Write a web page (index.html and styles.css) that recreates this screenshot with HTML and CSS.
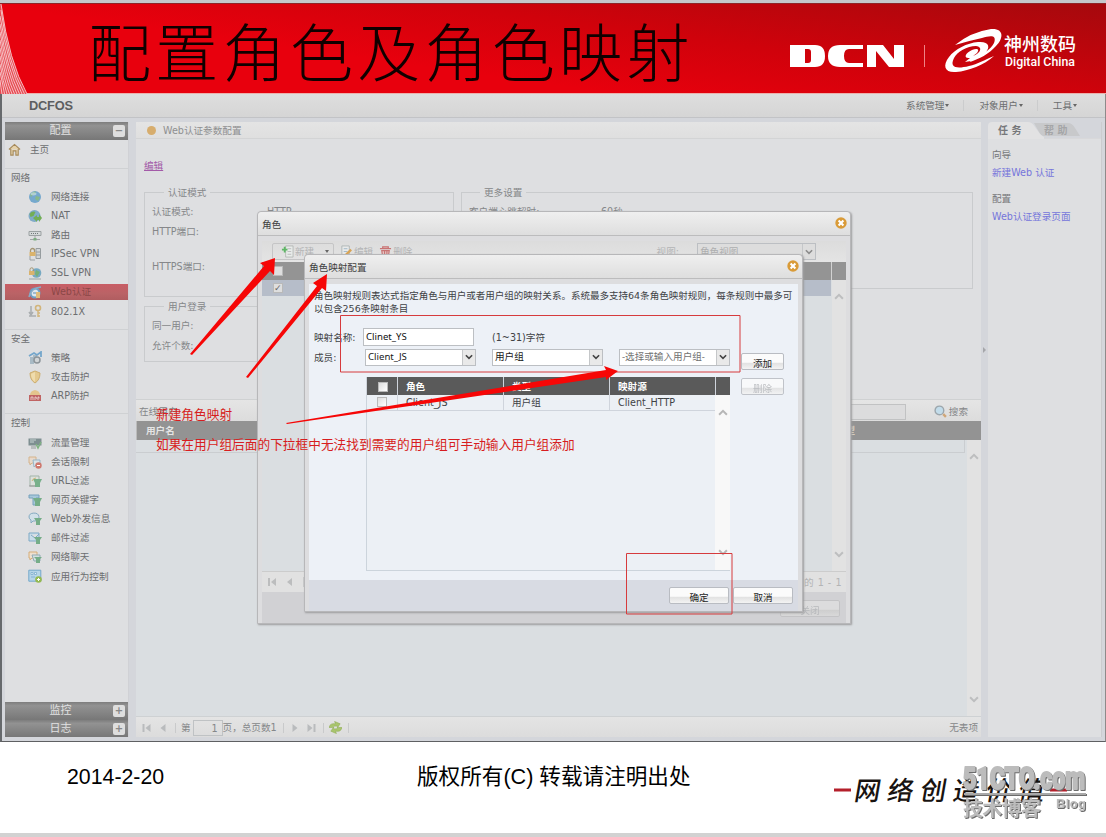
FILE: index.html
```
<!DOCTYPE html>
<html lang="zh-CN">
<head>
    <meta charset="UTF-8">
    <meta name="viewport" content="width=device-width, initial-scale=1.0">
    <title>配置角色及角色映射</title>
    <link rel="stylesheet" href="styles.css">
</head>
<body>
    <!-- Icon sprite -->
    <svg class="sprite" aria-hidden="true">
        <symbol id="i-home" viewBox="0 0 14 14"><path d="M1 7 7 1.500l6 5.500M3 6.500V13h2.500V8.500h3V13H11V6.500" fill="#e6d3ac" stroke="#a68a5a" stroke-width="1.200"/></symbol>
        <symbol id="i-globe" viewBox="0 0 14 14"><circle cx="7" cy="7" r="6" fill="#76a9cd"/><path d="M2 4q3-3 6-2.500l-1 3-3 1-1 2zM8 6l4 1-2 4-3-2z" fill="#86b98b"/><ellipse cx="5.500" cy="3.800" rx="3" ry="1.600" fill="#c5dcea" opacity=".7"/></symbol>
        <symbol id="i-nat" viewBox="0 0 14 14"><circle cx="6.500" cy="7" r="6" fill="#80abc8"/><path d="M1.500 5q3-3.500 6-2l-2 4-3 1zM5 9l4-3v2h2V5l3 4-3 4v-2H9v2z" fill="#72ae55"/></symbol>
        <symbol id="i-route" viewBox="0 0 14 14"><path d="M1 3.500h12v4H1z" fill="#d4d8d9" stroke="#9ba1a2"/><path d="M3 5.500h1m1 0h1m1 0h1m1 0h1" stroke="#717879"/><path d="M7 8v2M2 11.500h10" stroke="#a0a5a6"/><path d="M5.500 10h3v2.500h-3z" fill="#7bad80"/></symbol>
        <symbol id="i-ipsec" viewBox="0 0 14 14"><path d="M8 1.500h4.500v10H8zM8 5h4.500M8 8h4.500" fill="#d1d5d7" stroke="#969c9f"/><path d="M2.500 5V3.500a2 2 0 0 1 4 0V5" fill="none" stroke="#a59673" stroke-width="1.300"/><path d="M1.500 5h6v4h-6z" fill="#dab36c"/><path d="M2 9v4h5" fill="none" stroke="#9ca1a3"/></symbol>
        <symbol id="i-ssl" viewBox="0 0 14 14"><circle cx="8.500" cy="7" r="4.800" fill="#76a9c2"/><path d="m8 4 4 2-3 5-2-3z" fill="#77b079"/><path d="M2 5V3.500a1.700 1.700 0 0 1 3.400 0V5" fill="none" stroke="#a59673"/><path d="M1 5h5.500v4H1z" fill="#dab36c"/><path d="M1 13h12" stroke="#9aa4a2"/></symbol>
        <symbol id="i-web" viewBox="0 0 14 14"><circle cx="7" cy="8" r="4.500" fill="#dfe7ed" stroke="#6c9fc6" stroke-width="2"/><path d="M1 12Q3 3 13 2M5 8h6" fill="none" stroke="#88acc7" stroke-width="1.500"/><path d="M8 7h4v6H8z" fill="#dfbd7c"/></symbol>
        <symbol id="i-8021x" viewBox="0 0 14 14"><path d="M3 2v8m-2-2 2 3 2-3M1 12h7" fill="none" stroke="#a9adaf" stroke-width="1.500"/><circle cx="10" cy="4" r="2.500" fill="none" stroke="#d2b57b" stroke-width="1.600"/><path d="M10 6v7M10 9h2M10 12h2" stroke="#d2b57b" stroke-width="1.400"/></symbol>
        <symbol id="i-policy" viewBox="0 0 14 14"><path d="M2 6h4v7H2zM5 4h4v7H5z" fill="#a8bac5"/><path d="M1 5 6 2l3 2 4-3v5" fill="none" stroke="#74a6cb" stroke-width="1.800"/><circle cx="9" cy="9" r="3" fill="#d1d5d7" stroke="#8c9499" stroke-width="1.500"/></symbol>
        <symbol id="i-shield" viewBox="0 0 14 14"><path d="M7 1 12 3q0 7-5 10Q2 10 2 3z" fill="#e4c98f" stroke="#cdae70"/><path d="M7 2v10Q3 9 3 4z" fill="#efdcad"/></symbol>
        <symbol id="i-arp" viewBox="0 0 14 14"><path d="M2 6q0-4 5-5 5 1 5 5v6H2z" fill="#e4c58d"/><path d="M1 6h12v6H1z" fill="#c06463"/><path d="M3 11V8h2v3M7 11V8h1l1 2M10 11V8h1v1.500" fill="none" stroke="#eddcda" stroke-width=".8"/></symbol>
        <symbol id="i-flow" viewBox="0 0 14 14"><path d="M.5 2.500h13v7H.5z" fill="#7e8f91"/><path d="M2 4h6M2 6h4" stroke="#c8d4d3"/><path d="m8 8 2 4 3-6" fill="none" stroke="#7fb282" stroke-width="1.500"/><path d="M3 10h5v3H3z" fill="#b8bcbd"/></symbol>
        <symbol id="i-session" viewBox="0 0 14 14"><path d="M1 2h7v6H4l-2 2V8H1z" fill="#e8d9cb" stroke="#d5b48c"/><path d="M5 5h7v5H8l-2 2z" fill="#dae3e9" stroke="#97b5c8"/><circle cx="10.500" cy="10.500" r="3.200" fill="#cf796f"/><path d="M9 10.500h3" stroke="#fff"/></symbol>
        <symbol id="i-url" viewBox="0 0 14 14"><path d="M2 2h9v10H2z" fill="#dce1dc" stroke="#a2b4a9"/><path d="M1 12h9" stroke="#999"/><path d="M5 5h9l-2 4v4H7V9z" fill="#78b08b"/><path d="M4 7q1-3 4-3" fill="none" stroke="#ccb778"/></symbol>
        <symbol id="i-word" viewBox="0 0 14 14"><path d="M1 2h10v3H8v7H5V5H1z" fill="#a8c8db" stroke="#76a1bc"/><path d="M5 5h9l-2 4v4H7V9z" fill="#75ad88"/></symbol>
        <symbol id="i-post" viewBox="0 0 14 14"><path d="M1 5a5 4 0 1 1 6 4H5l-2 2V8Q1 7 1 5z" fill="#d1e0e9" stroke="#84aac1"/><path d="M6 6h8l-2 3v4H8V9z" fill="#75ad88"/></symbol>
        <symbol id="i-mail" viewBox="0 0 14 14"><path d="M1 2h10v8H1zM3 4l4 3 4-4" fill="#c8dce9" stroke="#7fa9c5"/><path d="M6 6h8l-2 3v4H8V9z" fill="#75ad88"/></symbol>
        <symbol id="i-chat" viewBox="0 0 14 14"><path d="M1 2h8v6H4l-2 2V8H1z" fill="#eee0cf" stroke="#d6ad79"/><path d="M4 5h8v6H6z" fill="#d4dfdf" stroke="#91abb4"/><path d="M6 7h8l-2 2v4H8V9z" fill="#75ad88"/></symbol>
        <symbol id="i-app" viewBox="0 0 14 14"><path d="M.8 1.200h12v11h-12z" fill="#b6d5e8" stroke="#74a8ca"/><path d="M3 3.500h2v2H3zM6.500 3.500h2v2h-2zM3 8h4" fill="#e7f1f5" stroke="#74a8ca" stroke-width=".7"/><circle cx="10.500" cy="10.500" r="3.300" fill="#94b951"/><path d="M9 10.500h3M10.500 9v3" stroke="#fff"/></symbol>
        <symbol id="i-down" viewBox="0 0 9 6"><path d="m1 1 3.500 3.500L8 1" fill="none" stroke="currentColor" stroke-width="1.800"/></symbol>
        <symbol id="i-up" viewBox="0 0 9 6"><path d="m1 5 3.500-3.500L8 5" fill="none" stroke="currentColor" stroke-width="1.800"/></symbol>
        <symbol id="i-close" viewBox="0 0 12 12"><circle cx="6" cy="6" r="5.700" fill="#d99b38"/><path d="m3.600 3.600 4.800 4.800m0-4.800L3.600 8.400" stroke="#fff" stroke-width="2.100"/></symbol>
        <symbol id="i-first" viewBox="0 0 10 10"><path d="M1 1h2v8H1zM9 1v8L4 5z" fill="currentColor"/></symbol>
        <symbol id="i-prev" viewBox="0 0 10 10"><path d="M7 1v8L2 5z" fill="currentColor"/></symbol>
        <symbol id="i-next" viewBox="0 0 10 10"><path d="M3 1v8l5-4z" fill="currentColor"/></symbol>
        <symbol id="i-last" viewBox="0 0 10 10"><path d="M1 1v8l5-4zM7 1h2v8H7z" fill="currentColor"/></symbol>
    </svg>

    <div class="slide">
        <header class="banner">
            <svg class="rays" viewBox="0 0 30 90">
                <path d="M0 0h1Q10 60 27 90H0z" fill="#e64a52"/>
                <path d="M1 0Q9 58 27 90M1 6Q8 60 24.500 90M0 12Q8 62 22 90M0 20Q7 65 19.500 90M0 28Q7 69 17 90M0 36Q6 72 14.500 90M0 44Q5 74 12 90M0 52Q4 76 9.500 90M0 60Q3 78 7 90M0 68Q3 81 4.500 90M0 76Q1 84 2 90" fill="none" stroke="#f7cdcf" stroke-width=".9"/>
            </svg>
            <h1>配置角色及角色映射</h1>
            <svg class="brand" viewBox="0 0 290 50">
                <path d="M0 20h25q10 0 10 11t-10 11H0zM15 24v14h3q3 0 3-3v-8q0-3-3-3zM73 20v4H59q-5 0-5 7t5 7h14v4H50q-12 0-12-11t12-11zM77 20h16l11 14V20h10v22H99L86 26v16h-9z" fill="#fff" fill-rule="evenodd"/>
                <path d="M134.500 20v22" stroke="#ef8285"/>
                <path d="M165 20Q181 7 201 4c13-1 13 9 5 17-7 8-17 13-26 16l3-4c10-3 18-9 21-15 3-8-3-8-12-5q-14 3-27 7zM204 31c-10 9-25 15-38 16-11 1-14-6-7-15 6-8 18-14 29-15 11-1 13 5 7 11-4 5-12 8-20 9l5-4c-7 1-5-5 2-8 5-2 8-1 5 3l-4 3c8-3 10-9 3-10-9 0-19 6-22 12-5 10 3 11 15 8 9-2 15-6 25-10z" fill="#fff"/>
                <text x="214" y="26" class="brand-cn" textLength="72">神州数码</text>
                <text x="215" y="40.500" class="brand-en" textLength="70" lengthAdjust="spacingAndGlyphs">Digital China</text>
            </svg>
        </header>

        <div class="console">
            <div class="topbar">
                <strong class="logo">DCFOS</strong>
                <nav class="menu">
                    <span>系统管理<i class="caret"></i></span>
                    <span>对象用户<i class="caret"></i></span>
                    <span>工具<i class="caret"></i></span>
                </nav>
            </div>

            <div class="workspace">
                <aside class="sidebar">
                    <div class="side-head">配置<b class="toggle">−</b></div>
                    <div class="home"><svg><use href="#i-home"/></svg>主页</div>
                    <div class="group">
                        <h3>网络</h3>
                        <ul>
                            <li><svg><use href="#i-globe"/></svg>网络连接</li>
                            <li><svg><use href="#i-nat"/></svg>NAT</li>
                            <li><svg><use href="#i-route"/></svg>路由</li>
                            <li><svg><use href="#i-ipsec"/></svg>IPSec VPN</li>
                            <li><svg><use href="#i-ssl"/></svg>SSL VPN</li>
                            <li class="active"><svg><use href="#i-web"/></svg>Web认证</li>
                            <li><svg><use href="#i-8021x"/></svg>802.1X</li>
                        </ul>
                    </div>
                    <div class="group">
                        <h3>安全</h3>
                        <ul>
                            <li><svg><use href="#i-policy"/></svg>策略</li>
                            <li><svg><use href="#i-shield"/></svg>攻击防护</li>
                            <li><svg><use href="#i-arp"/></svg>ARP防护</li>
                        </ul>
                    </div>
                    <div class="group">
                        <h3>控制</h3>
                        <ul>
                            <li><svg><use href="#i-flow"/></svg>流量管理</li>
                            <li><svg><use href="#i-session"/></svg>会话限制</li>
                            <li><svg><use href="#i-url"/></svg>URL过滤</li>
                            <li><svg><use href="#i-word"/></svg>网页关键字</li>
                            <li><svg><use href="#i-post"/></svg>Web外发信息</li>
                            <li><svg><use href="#i-mail"/></svg>邮件过滤</li>
                            <li><svg><use href="#i-chat"/></svg>网络聊天</li>
                            <li><svg><use href="#i-app"/></svg>应用行为控制</li>
                        </ul>
                    </div>
                    <div class="side-foot">
                        <div class="side-head">监控<b class="toggle">+</b></div>
                        <div class="side-head">日志<b class="toggle">+</b></div>
                    </div>
                </aside>

                <main class="main">
                    <div class="panel-title"><i class="dot"></i>Web认证参数配置</div>
                    <div class="settings">
                        <a class="edit" href="#">编辑</a>
                        <div class="columns">
                            <div>
                                <fieldset class="mode">
                                    <legend>认证模式</legend>
                                    <p><label>认证模式:</label>HTTP</p>
                                    <p><label>HTTP端口:</label></p>
                                    <p class="https"><label>HTTPS端口:</label></p>
                                </fieldset>
                                <fieldset class="login">
                                    <legend>用户登录</legend>
                                    <p><label>同一用户:</label></p>
                                    <p><label>允许个数:</label></p>
                                </fieldset>
                            </div>
                            <fieldset class="more">
                                <legend>更多设置</legend>
                                <p><label>客户端心跳超时:</label>60秒</p>
                            </fieldset>
                        </div>
                    </div>
                    <div class="list-bar">
                        <span>在线用户</span>
                        <div class="search">
                            <i class="search-box"></i>
                            <svg viewBox="0 0 12 12"><circle cx="5" cy="5" r="4" fill="#c2dcea" stroke="#9ca6ac" stroke-width="1.300"/><path d="m8.500 8.500 2.500 2.500" stroke="#cfa678" stroke-width="2.200"/></svg>
                            搜索
                        </div>
                    </div>
                    <div class="list-head"><span>用户名</span><span class="list-type">型</span></div>
                    <div class="list-body">
                        <div class="list-row"></div>
                        <div class="scroll"><svg><use href="#i-up"/></svg><svg><use href="#i-down"/></svg></div>
                    </div>
                    <div class="pager">
                        <svg><use href="#i-first"/></svg>
                        <svg><use href="#i-prev"/></svg>
                        <i class="sep"></i>
                        <span>第</span><b class="page-no">1</b><span class="page-count">页，总页数1</span>
                        <i class="sep"></i>
                        <svg><use href="#i-next"/></svg>
                        <svg><use href="#i-last"/></svg>
                        <i class="sep"></i>
                        <svg class="refresh" viewBox="0 0 14 14"><path d="M0 7Q1 2 7 3L6 .5 12 3 9 7.500V5.500Q5 5 4 7zM14 7q-1 5-7 4l1 2.500L2 11l3-4.500v2q4 .5 5-1.500z" fill="#a9c56d" stroke="#8fab55" stroke-width=".6"/></svg>
                        <i class="sep"></i>
                        <span class="empty">无表项</span>
                    </div>
                </main>

                <div class="splitter"></div>

                <aside class="tasks">
                    <div class="tabs">
                        <svg viewBox="0 0 114 17"><path d="M46 1h34q4 0 7 5l5 8H56q-3 0-5-4z" fill="#c8c9cb"/><path d="M0 17V4q0-4 4-4h36q4 0 7 5l5 7q2 2 4 3v2z" fill="#e2e2e3"/></svg>
                        <span>任 务</span><span class="tab-off">帮 助</span>
                    </div>
                    <div class="task-list">
                        <h4>向导</h4>
                        <a href="#">新建Web 认证</a>
                        <h4>配置</h4>
                        <a href="#">Web认证登录页面</a>
                    </div>
                </aside>
            </div>
        </div>

        <footer class="foot">
            <span class="date">2014-2-20</span>
            <span class="rights">版权所有(C) 转载请注明出处</span>
            <svg class="slogan" viewBox="0 0 276 80">
                <path d="M4 39h17M220 39h17" stroke="#b41f2b" stroke-width="3"/>
                <text x="24" y="49" class="slogan-text" textLength="190" transform="translate(8 0) skewX(-10)">网络创造价值</text>
                <g class="mark">
                    <text x="133" y="38" class="mark-big" textLength="122" lengthAdjust="spacingAndGlyphs">51CTO.com</text>
                    <text x="133" y="65" class="mark-cn" textLength="78">技术博客</text>
                    <text x="226" y="57" class="mark-blog" textLength="30">Blog</text>
                    <path d="M134 43h122" stroke="#a9a9a9" stroke-width="2"/>
                </g>
            </svg>
        </footer>
        <div class="edge"></div>

        <!-- Role window, disabled behind the mapping dialog -->
        <section class="dialog role-dialog">
            <div class="dialog-title">角色<svg><use href="#i-close"/></svg></div>
            <div class="role-body">
                <div class="role-tools">
                    <span class="tool-new"><svg viewBox="0 0 14 14"><path d="M5 1h8v12H5z" fill="#e8ecea" stroke="#b4b8b5"/><path d="M7 4h4M7 7h4M7 10h4" stroke="#bbb"/><path d="M4 2v6M1 5h6" stroke="#5fb766" stroke-width="2"/></svg>新建<i class="caret"></i></span>
                    <span><svg viewBox="0 0 14 14"><path d="M2 1h8v12H2z" fill="#e9eaea" stroke="#aeb6b7"/><path d="M4 4h4M4 7h4" stroke="#9eb5c5"/><path d="m5 12 7-7" stroke="#d9a354" stroke-width="2.500"/></svg>编辑</span>
                    <span><svg viewBox="0 0 14 14"><path d="M1 4h12M4 4V2h6v2M3 6h8l-1 7H4zM6 6v6M8.500 6v6" fill="#e7cbca" stroke="#c87373" stroke-width="1.300"/></svg>删除</span>
                    <span class="view-label">视图:</span>
                    <span class="select view-select">角色视图<i><svg><use href="#i-down"/></svg></i></span>
                </div>
                <div class="role-head"><i class="check"></i><span></span></div>
                <div class="role-list">
                    <div class="role-row"><i class="check">✓</i></div>
                    <div class="scroll"><svg><use href="#i-up"/></svg><svg><use href="#i-down"/></svg></div>
                </div>
                <div class="role-pager"><svg><use href="#i-first"/></svg><svg><use href="#i-prev"/></svg><i class="sep"></i><span>1 中的 1 - 1</span></div>
                <div class="role-foot"><span class="btn off">关闭</span></div>
            </div>
        </section>

        <section class="dialog map-dialog">
            <div class="dialog-title">角色映射配置<svg><use href="#i-close"/></svg></div>
            <div class="map-body">
                <p class="hint">角色映射规则表达式指定角色与用户或者用户组的映射关系。系统最多支持64条角色映射规则，每条规则中最多可<br>以包含256条映射条目</p>
                <div class="row name-row">
                    <label>映射名称:</label>
                    <span class="input">Clinet_YS</span>
                    <span>(1~31)字符</span>
                </div>
                <div class="row member-row">
                    <label>成员:</label>
                    <span class="select">Client_JS<i><svg><use href="#i-down"/></svg></i></span>
                    <span class="select">用户组<i><svg><use href="#i-down"/></svg></i></span>
                    <span class="select blank">-选择或输入用户组-<i><svg><use href="#i-down"/></svg></i></span>
                </div>
                <div class="map-grid">
                    <div class="table">
                        <div class="tr th"><span><i class="check"></i></span><span>角色</span><span>类型</span><span>映射源</span><span></span></div>
                        <div class="table-body">
                            <div class="tr"><span><i class="check"></i></span><span>Client_JS</span><span>用户组</span><span>Client_HTTP</span></div>
                            <div class="scroll"><svg><use href="#i-up"/></svg><svg><use href="#i-down"/></svg></div>
                        </div>
                    </div>
                    <div class="side-btns"><span class="btn">添加</span><span class="btn off">删除</span></div>
                </div>
            </div>
            <div class="map-foot"><span class="btn">确定</span><span class="btn">取消</span></div>
        </section>

        <!-- Presenter's marks -->
        <div class="marks">
            <svg viewBox="0 0 1106 837">
                <g fill="none" stroke="#d63b3d">
                    <path d="M340.500 315.500h399.500v56.500h-399.500zM626.500 553.500h105.500v60.500h-105.500z"/>
                </g>
                <path d="M190 354 264 266 260 263 275 258 274 275 270 271 192 355zM246 377 317 286 313 283 327 274 326 291 322 288 248 378zM286 423 606 370 604 366 618 371 606 380 606 377 287 424z" fill="#f60606"/>
            </svg>
            <p class="note">新建角色映射</p>
            <p class="note note-tip">如果在用户组后面的下拉框中无法找到需要的用户组可手动输入用户组添加</p>
        </div>
    </div>
</body>
</html>
```
FILE: styles.css
```
* { box-sizing: border-box; }
body { margin: 0; font-family: "DejaVu Sans", "Noto Sans CJK SC", sans-serif; font-size: 9.6px; line-height: 13px; color: #6c6e70; }
h1, h3, h4, p, ul { margin: 0; padding: 0; font-weight: normal; }
h3, h4 { font-size: inherit; }
ul { list-style: none; }
svg { display: block; flex: none; }
.sprite { position: absolute; width: 0; height: 0; }

.slide { position: relative; width: 1106px; height: 837px; overflow: hidden; background: #fff; display: flex; flex-direction: column; border-top: 3px solid #c5c8cb; }

/* banner */
.banner { height: 91px; display: flex; background: linear-gradient(8deg, #e8000d 35%, #d0020b 62%, #a5090d 100%); border-top: 1px solid #8e2527; border-bottom: 1px solid #ecb0ac; }
.rays { width: 30px; height: 90px; }
.banner h1 { width: 750px; padding-left: 58px; font-family: "Noto Sans CJK SC", sans-serif; font-weight: 300; font-size: 63px; letter-spacing: 4.300px; line-height: 89px; color: #100000; white-space: nowrap; }
.brand { width: 290px; height: 50px; margin: 21px 0 0 10px; }
.brand-cn { font: 500 18px "Noto Sans CJK SC", sans-serif; fill: #fff; }
.brand-en { font: 500 13.500px Roboto, sans-serif; fill: #fff; }

/* console frame */
.console { height: 648px; background: #d4d6db; border-left: 2px solid #66696c; border-right: 1px solid #8e8a8a; border-bottom: 1px solid #5f6062; display: flex; flex-direction: column; }
.topbar { height: 24px; display: flex; justify-content: space-between; align-items: center; padding-left: 27px; background: linear-gradient(#dedede, #d5d5d5); border-bottom: 1px solid #c2c3c6; }
.logo { font: bold 12.800px "Liberation Sans", sans-serif; letter-spacing: -.2px; color: #5d5e60; }
.menu { display: flex; }
.menu span { padding: 0 14px 0 15px; border-right: 1px solid #cbcccd; line-height: 11px; }
.menu span:last-child { padding-right: 28px; border-right: none; }
.caret { display: inline-block; border: 2.500px solid transparent; border-top: 3px solid #666; border-bottom: 0; margin-left: 1px; vertical-align: 2.500px; }
.workspace { flex: 1; display: flex; padding: 4px 3px 4px 3px; }

/* sidebar */
.sidebar { width: 124px; display: flex; flex-direction: column; background: #dedfe1; border-right: 1px solid #d0d1d5; }
.side-head { height: 17.500px; display: flex; justify-content: center; align-items: center; position: relative; padding-right: 12px; background: linear-gradient(#7d7d7d, #929292 20%, #777); color: #e1e1e1; font-size: 11px; }
.toggle { position: absolute; right: 3px; top: 3px; width: 12px; height: 12px; border-radius: 2px; background: #dedede; color: #888; font-size: 10px; line-height: 11px; text-align: center; }
.home { height: 28px; display: flex; align-items: center; padding: 0 0 8px 3px; }
.home svg { width: 13px; height: 13px; margin-right: 9px; }
.group { border-top: 1px solid #cfd1d3; padding-bottom: 8px; }
.group h3 { height: 18.600px; padding: 2px 0 0 6px; }
.group li { height: 19.080px; display: flex; align-items: center; padding-left: 23px; }
.group svg { width: 14px; height: 14px; margin-right: 9px; }
.group .active { height: 16px; margin: 1.500px 0; background: linear-gradient(#c85d65, #ba6366 60%, #b05d60); color: #8b4747; }
.side-foot { margin-top: auto; }

/* main panel */
.main { width: 845px; margin-left: 7px; display: flex; flex-direction: column; background: #dedfe1; }
.panel-title { height: 17px; display: flex; align-items: center; background: linear-gradient(#e4e4e4, #dfdfdf); border-bottom: 1px solid #d3d4d5; color: #8e8f90; }
.dot { width: 9px; height: 9px; margin: 0 7px 0 11px; border-radius: 50%; background: #d7ad6d; }
.settings { height: 260px; padding: 20px 8px 0 8px; color: #858789; }
.edit { display: block; color: #a35aa8; margin-bottom: 14px; }
.columns { display: flex; gap: 7px; }
fieldset { margin: 0; padding: 0 0 0 7px; border: 1px solid #c9cbcd; }
legend { padding: 0 4px; margin-left: 12px; line-height: 13px; }
fieldset p { display: flex; height: 20px; line-height: 20px; }
fieldset label { width: 115px; }
.mode { width: 310px; height: 111px; padding-top: 3px; }
.mode .https { margin-top: 15px; }
.login { width: 310px; height: 62px; margin-top: 3px; padding-top: 3px; }
.more { width: 512px; height: 103px; padding-top: 3px; }
.more legend { margin-left: 11px; }
.more label { width: 132px; }
.list-bar { height: 22px; display: flex; justify-content: space-between; align-items: center; padding: 2px 13px 0 3px; background: linear-gradient(#e5e5e5, #dcdcdc); border-top: 1px solid #cfd1d2; color: #858789; }
.search { display: flex; align-items: center; }
.search svg { width: 13px; height: 13px; margin-right: 2px; }
.search-box { width: 200px; height: 16px; margin-right: 28px; background: #dcdcdd; border: 1px solid #c1c2c3; }
.list-head { height: 19px; display: flex; justify-content: space-between; padding: 3px 126px 0 9px; background: #939393; color: #e5e5e5; font-weight: bold; border-left: 1px solid #bbb; }
.list-type { color: #d8d2c6; }
.list-body { flex: 1; display: flex; justify-content: space-between; background: #dadee1; }
.list-row { width: 829px; height: 13px; border: 1px solid #cacdd0; border-width: 0 1px 1px 0; }
.scroll { width: 14px; display: flex; flex-direction: column; align-items: center; justify-content: space-between; background: #e2e2e2; color: #bdbebf; padding: 13px 0; }
.scroll svg { width: 10px; height: 7px; }
.pager { height: 21px; display: flex; align-items: center; gap: 6px; padding: 1px 0 0 5px; background: linear-gradient(#e4e4e4, #dcdcdc); border-top: 1px solid #ced1d3; color: #858789; }
.pager svg { width: 11px; height: 10px; color: #b9bbbd; }
.pager span { white-space: nowrap; }
.pager .sep { height: 10px; border-left: 1px solid #c9cacb; margin-right: -1px; }
.page-no { width: 30px; height: 16px; margin: 0 -6px 0 -4px; padding-right: 4px; border: 1px solid #bfc2c4; font-weight: normal; line-height: 15px; text-align: right; }
.pager .refresh { width: 13px; height: 13px; }
.pager .empty { margin-left: auto; padding-right: 3px; }

/* right column */
.splitter { width: 7px; display: flex; align-items: center; justify-content: center; }
.splitter::after { content: ""; margin: 0 -3px 160px 0; border: 3px solid transparent; border-left-color: #a5a6aa; }
.tasks { flex: 1; background: #dedfe1; border-right: 1px solid #cbcccf; }
.tabs { height: 17px; position: relative; display: flex; background: #d4d6db; border-bottom: 1px solid #d8d8da; color: #76777a; font-size: 10px; font-weight: bold; }
.tabs svg { position: absolute; width: 114px; height: 17px; left: 0; top: 0; }
.tabs span { position: relative; padding: 2px 0 0 10px; width: 46px; white-space: nowrap; }
.tabs .tab-off { color: #a4a5a7; }
.task-list { padding: 9px 0 0 4px; }
.task-list h4 { line-height: 14px; color: #767779; }
.task-list a { display: block; margin: 4px 0 12px; line-height: 14px; color: #7575db; text-decoration: none; white-space: nowrap; }

/* footer */
.foot { height: 91px; display: flex; padding-left: 67px; font-family: "Liberation Sans", "Noto Sans CJK SC", sans-serif; line-height: 70px; color: #000; }
.date { width: 350px; font-size: 21.300px; }
.rights { width: 413px; font-size: 21.600px; white-space: nowrap; }
.slogan { width: 276px; height: 80px; margin-top: 9px; }
.slogan-text { font: 500 26px "Noto Sans CJK SC", sans-serif; fill: #181310; }
.mark { fill: #bcbcbc; filter: drop-shadow(1px 1px 0 #6c6c6c); }
.mark-big { font: 900 32px Roboto, "Liberation Sans", sans-serif; stroke: #bcbcbc; stroke-width: 2px; stroke-linejoin: round; }
.mark-cn { font: bold 20px "Noto Sans CJK SC", sans-serif; }
.mark-blog { font: bold 13px "Liberation Sans", sans-serif; }
.edge { height: 4px; background: #d2d2d2; }

/* dialogs */
.dialog { position: absolute; display: flex; flex-direction: column; background: #dddddf; border: 1px solid #b7b7b9; border-radius: 4px 4px 0 0; box-shadow: 1px 1px 2px #9c9c9e; }
.dialog-title { height: 24px; display: flex; align-items: center; justify-content: space-between; padding: 2px 3px 0 4px; background: linear-gradient(#efefef, #dedede); border-bottom: 1px solid #bcbcbd; border-radius: 4px 4px 0 0; color: #404040; }
.dialog-title svg { width: 12px; height: 12px; margin-top: -3px; }
.role-dialog { left: 257px; top: 208px; width: 594px; height: 413px; }
.role-body { flex: 1; margin: 5px 4px 0; display: flex; flex-direction: column; color: #b3b4b5; }
.role-tools { height: 21px; display: flex; align-items: center; gap: 6px; padding: 0 0 0 10px; background: linear-gradient(#dcdcdc, #e4e4e4); }
.role-tools > span { display: flex; align-items: center; }
.role-tools svg { width: 13px; height: 13px; margin-right: 1px; }
.role-tools .tool-new { width: 62px; height: 17px; padding-left: 8px; border: 1px solid #c5c5c6; border-radius: 2px; }
.tool-new .caret { margin-left: 11px; }
.role-tools .view-label { margin-left: auto; margin-right: 12px; }
.role-tools .view-select { width: 119px; margin-right: 30px; background: #dddddd; color: #adaeaf; }
.role-tools .select svg { width: 8px; height: 6px; margin: 0; }
.role-head { height: 18px; display: flex; justify-content: space-between; align-items: center; padding-left: 11px; background: #949494; }
.role-head span { width: 15px; height: 18px; border-left: 1px solid #d2d2d2; }
.role-list { flex: 1; display: flex; justify-content: space-between; background: #dadee1; }
.role-row { width: 569px; height: 16px; padding: 3px 0 0 11px; background: #b6bdc9; }
.check { display: block; width: 10px; height: 10px; background: linear-gradient(135deg, #ddd, #fff); border: 1px solid #b9b9b9; font-size: 9px; line-height: 9px; color: #666; font-style: normal; }
.role-list .check, .role-head .check { background: #dedede; }
.role-pager { height: 21px; display: flex; align-items: center; gap: 8px; padding-left: 5px; background: #e1e1e1; border-top: 1px solid #ccc; }
.role-pager svg { width: 10px; height: 10px; color: #bcbdbe; }
.role-pager .sep { height: 10px; border-left: 1px solid #c9cacb; }
.role-pager span { margin-left: auto; padding-right: 4px; letter-spacing: .5px; }
.role-foot { height: 31px; display: flex; justify-content: flex-end; padding: 8px 6px 0 0; background: #d1d1d4; }
.btn { width: 60px; height: 17px; padding-top: 3px; border: 1px solid #b9bcc2; border-radius: 2px; background: linear-gradient(#fbfbfb 0 55%, #e2e2e2 62%, #f3f3f3); color: #252525; text-align: center; }
.btn.off { color: #b4b6b9; opacity: .85; }
.role-foot .off { background: linear-gradient(#dfdfdf 0 55%, #cecece 62%, #dadada); border-color: #c1c1c3; }

.map-dialog { left: 304px; top: 251px; width: 499px; height: 358px; }
.map-body { height: 296px; margin: 5px 4px 0; padding: 5px 0 0 5px; background: #edf1f7; color: #404245; }
.hint { height: 35px; font-size: 9.520px; line-height: 13px; white-space: nowrap; }
.row { display: flex; align-items: center; height: 20px; }
.row label { width: 49px; white-space: nowrap; }
.name-row { margin-top: 3px; }
.input { width: 111px; height: 18px; margin-right: 18px; padding-left: 2px; background: #fff; border: 1px solid #bcbfc3; font-family: "Noto Sans", "Noto Sans CJK SC", sans-serif; font-size: 9.600px; line-height: 16px; color: #111; }
.member-row label { width: 51px; }
.select { width: 111px; height: 17px; margin-right: 16px; display: flex; align-items: center; justify-content: space-between; padding-left: 2px; background: #fff; border: 1px solid #bcbfc3; font-family: "Noto Sans", "Noto Sans CJK SC", sans-serif; font-size: 9.600px; line-height: 14px; color: #181818; white-space: nowrap; }
.select i { width: 13px; height: 15px; display: flex; align-items: center; justify-content: center; background: #e9e9e9; border-left: 1px solid #c5c7c9; color: #444; }
.select svg { width: 8px; height: 6px; }
.view-select i { background: none; color: #8c8c8c; }
.blank { margin: 0; color: #717171; }
.blank i { color: #444; }
.map-grid { display: flex; align-items: flex-start; padding-left: 52px; margin-top: 10px; }
.table { width: 364px; }
.tr { display: flex; width: 350px; height: 16px; line-height: 15px; }
.tr > span { width: 106px; padding-left: 8px; border: 1px solid #cfd4dc; border-width: 0 0 1px 1px; }
.tr > span:first-child { width: 31px; padding: 2px 0 0 11px; }
.tr.th { width: 364px; height: 18px; background: #5a5a5a; color: #fff; font-weight: bold; line-height: 19px; }
.th > span { border-width: 0 0 0 1px; }
.th > span:first-child { padding-top: 5px; }
.th > span:last-child { width: 15px; padding: 0; }
.table-body { height: 176px; display: flex; justify-content: space-between; background: #ecf0f5; border: 1px solid #ccd4dc; border-width: 0 0 1px 1px; }
.table-body .tr > span:first-child { border-left: none; width: 30px; padding-left: 10px; }
.table-body .scroll { width: 15px; background: #f8f8f8; padding: 14px 0; color: #b6b6b6; }
.side-btns { display: flex; flex-direction: column; gap: 8px; margin: -24px 0 0 11px; }
.side-btns .btn { width: 43px; height: 17px; }
.map-foot { flex: 1; margin: 0 4px; display: flex; justify-content: flex-end; gap: 4px; padding: 7px 5px 0 0; background: #d8dbe3; }

/* presenter's marks */
.marks { position: absolute; left: 0; top: -3px; width: 1106px; height: 837px; padding: 405px 0 0 156px; }
.marks svg { position: absolute; left: 0; top: 0; width: 1106px; height: 837px; }
.note { height: 30px; font: 12.700px/18px "Noto Sans CJK SC", sans-serif; color: #d71d20; white-space: nowrap; }
```
